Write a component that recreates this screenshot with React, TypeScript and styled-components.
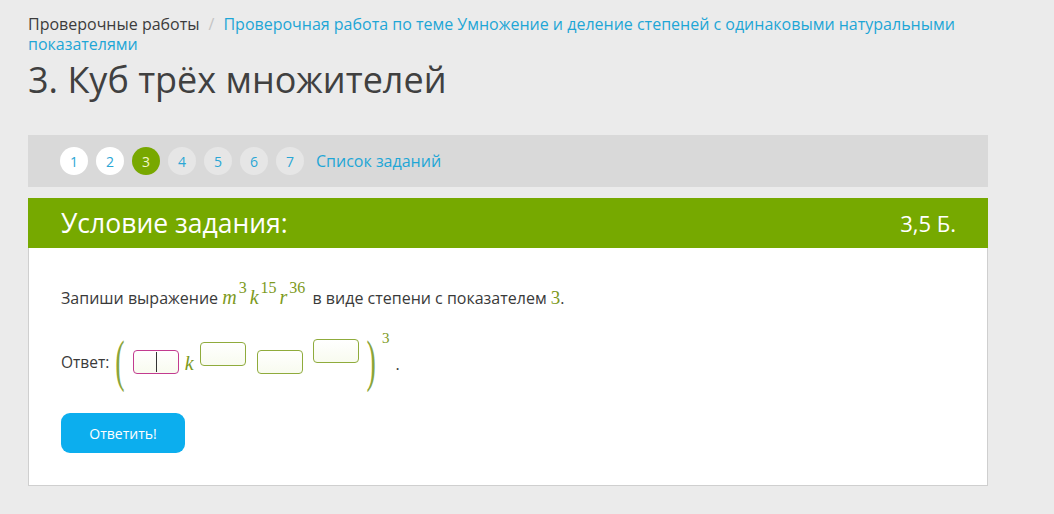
import React from "react";
import styled, { createGlobalStyle } from "styled-components";

const GlobalStyle = createGlobalStyle`
  html, body {
    margin: 0;
    padding: 0;
    background: #ebebeb;
    font-family: "Open Sans", "Noto Sans", sans-serif;
    color: #3a3a3a;
  }
`;

const Page = styled.div`
  width: 960px;
  padding: 14px 0 30px 28px;
`;

const Crumbs = styled.div`
  font-size: 16px;
  line-height: 20px;
  width: 950px;
`;

const CrumbRoot = styled.span`
  color: #3c3c3c;
`;

const CrumbSep = styled.span`
  color: #c4c4c4;
  padding: 0 9px;
`;

const CrumbLink = styled.a`
  color: #1ea6d6;
  text-decoration: none;
`;

const Title = styled.h1`
  margin: 4px 0 0;
  font-size: 36px;
  font-weight: 400;
  line-height: 44px;
  color: #404040;
`;

const NavBar = styled.div`
  margin-top: 33px;
  height: 52px;
  background: #d9d9d9;
  display: flex;
  align-items: center;
  padding-left: 32px;
  gap: 8px;
`;

const Dot = styled.span<{ $kind: "done" | "active" | "todo" }>`
  width: 28px;
  height: 28px;
  border-radius: 50%;
  display: flex;
  align-items: center;
  justify-content: center;
  font-size: 14px;
  background: ${({ $kind }) =>
    $kind === "done" ? "#ffffff" : $kind === "active" ? "#78a800" : "#e6e6e6"};
  color: ${({ $kind }) => ($kind === "active" ? "#f2f7c8" : "#2aa6d5")};
`;

const ListLink = styled.a`
  margin-left: 4px;
  font-size: 16px;
  color: #1ea6d6;
  text-decoration: none;
`;

const Card = styled.div`
  margin-top: 11px;
`;

const CardHeader = styled.div`
  height: 50px;
  background: #76a900;
  display: flex;
  align-items: center;
  justify-content: space-between;
  padding: 0 32px 0 33px;
  color: #ffffff;
`;

const HeaderTitle = styled.span`
  font-size: 26.5px;
`;

const Points = styled.span`
  font-size: 22px;
`;

const CardBody = styled.div`
  background: #ffffff;
  border: 1px solid #cfcfcf;
  border-top: none;
  padding: 36px 32px 32px;
`;

const Statement = styled.p`
  margin: 0;
  font-size: 16px;
  line-height: 26px;
`;

const MathVar = styled.span`
  font-family: "Liberation Serif", "DejaVu Serif", serif;
  font-style: italic;
  color: #7d9a1c;
  font-size: 20px;
`;

const MathNum = styled.sup`
  font-family: "Liberation Serif", "DejaVu Serif", serif;
  color: #7d9a1c;
  font-size: 16px;
  vertical-align: 11px;
  line-height: 0;
  margin: 0 3px 0 2px;
`;

const MathInline = styled.span`
  font-family: "Liberation Serif", "DejaVu Serif", serif;
  color: #7d9a1c;
  font-size: 19px;
`;

const AnswerRow = styled.div`
  margin-top: 23px;
  display: flex;
  align-items: center;
  height: 56px;
  font-size: 15.5px;
`;

const Paren = styled.span`
  font-family: "Liberation Serif", "DejaVu Serif", serif;
  font-size: 28px;
  color: #8aa53a;
  line-height: 28px;
  transform: scale(1, 2.05);
  display: inline-block;
`;

const Box = styled.span<{ $raise: number; $pink?: boolean }>`
  width: 44px;
  height: 22px;
  border: 1px solid ${({ $pink }) => ($pink ? "#c23b8f" : "#8fab3c")};
  border-radius: 4px;
  background: linear-gradient(#ffffff, #f8fbef);
  position: relative;
  top: ${({ $raise }) => -$raise}px;
  display: inline-block;
`;

const Caret = styled.span`
  position: absolute;
  left: 22px;
  top: 1px;
  bottom: 1px;
  width: 1px;
  background: #333;
`;

const AnsVar = styled(MathVar)`
  position: relative;
  top: 1px;
  margin: 0 6px 0 6px;
`;

const OuterExp = styled.span`
  font-family: "Liberation Serif", "DejaVu Serif", serif;
  color: #7d9a1c;
  font-size: 15px;
  align-self: flex-start;
  margin: -4px 0 0 6px;
`;

const Period = styled.span`
  font-size: 16px;
  margin-left: 6px;
  position: relative;
  top: 2px;
`;

const Submit = styled.button`
  margin-top: 23px;
  width: 124px;
  height: 40px;
  border: none;
  border-radius: 9px;
  background: #0caeee;
  color: #ffffff;
  font-family: "Open Sans", "Noto Sans", sans-serif;
  font-size: 14px;
  cursor: pointer;
`;

export default function App() {
  const dots: Array<"done" | "active" | "todo"> = ["done", "done", "active", "todo", "todo", "todo", "todo"];
  return (
    <>
      <GlobalStyle />
      <Page>
        <Crumbs>
          <CrumbRoot>Проверочные работы</CrumbRoot>
          <CrumbSep>/</CrumbSep>
          <CrumbLink href="#">
            Проверочная работа по теме Умножение и деление степеней с одинаковыми натуральными показателями
          </CrumbLink>
        </Crumbs>
        <Title>3. Куб трёх множителей</Title>
        <NavBar>
          {dots.map((k, i) => (
            <Dot key={i} $kind={k}>
              {i + 1}
            </Dot>
          ))}
          <ListLink href="#">Список заданий</ListLink>
        </NavBar>
        <Card>
          <CardHeader>
            <HeaderTitle>Условие задания:</HeaderTitle>
            <Points>3,5 Б.</Points>
          </CardHeader>
          <CardBody>
            <Statement>
              Запиши выражение <MathVar>m</MathVar>
              <MathNum>3</MathNum>
              <MathVar>k</MathVar>
              <MathNum>15</MathNum>
              <MathVar>r</MathVar>
              <MathNum>36</MathNum> в виде степени с показателем <MathInline>3</MathInline>.
            </Statement>
            <AnswerRow>
              Ответ:
              <Paren style={{ marginLeft: 6, marginRight: 8 }}>(</Paren>
              <Box $raise={0} $pink>
                <Caret />
              </Box>
              <AnsVar>k</AnsVar>
              <Box $raise={8} />
              <Box $raise={0} style={{ marginLeft: 11 }} />
              <Box $raise={11} style={{ marginLeft: 10 }} />
              <Paren style={{ marginLeft: 8 }}>)</Paren>
              <OuterExp>3</OuterExp>
              <Period>.</Period>
            </AnswerRow>
            <Submit>Ответить!</Submit>
          </CardBody>
        </Card>
      </Page>
    </>
  );
}
